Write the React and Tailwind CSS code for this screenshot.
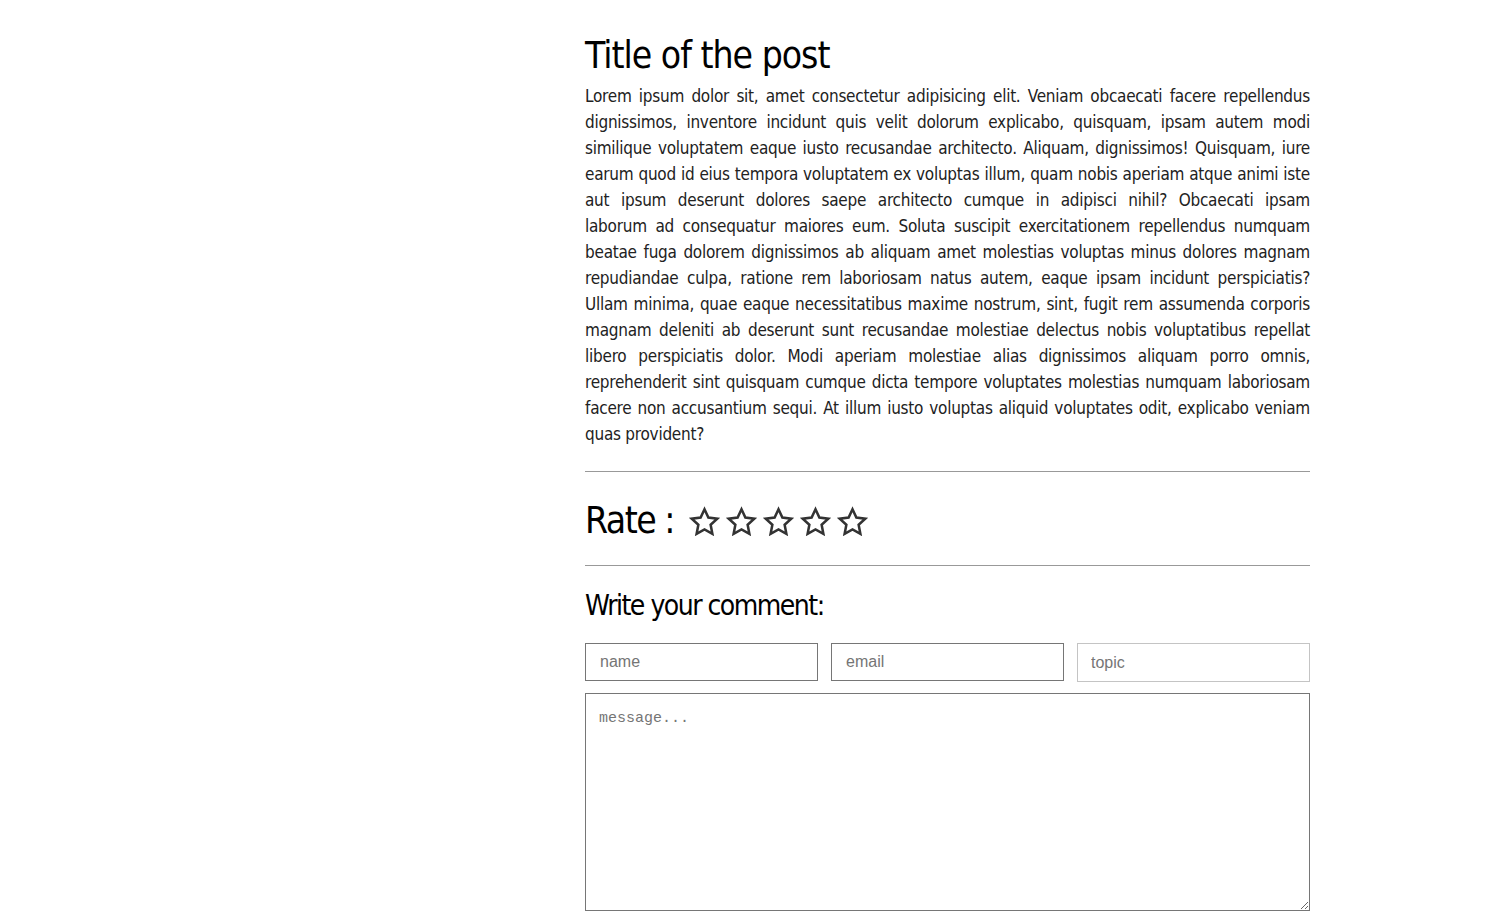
import { useState } from "react";

const bodyLines = [
  "Lorem ipsum dolor sit, amet consectetur adipisicing elit. Veniam obcaecati facere repellendus",
  "dignissimos, inventore incidunt quis velit dolorum explicabo, quisquam, ipsam autem modi",
  "similique voluptatem eaque iusto recusandae architecto. Aliquam, dignissimos! Quisquam, iure",
  "earum quod id eius tempora voluptatem ex voluptas illum, quam nobis aperiam atque animi iste",
  "aut ipsum deserunt dolores saepe architecto cumque in adipisci nihil? Obcaecati ipsam",
  "laborum ad consequatur maiores eum. Soluta suscipit exercitationem repellendus numquam",
  "beatae fuga dolorem dignissimos ab aliquam amet molestias voluptas minus dolores magnam",
  "repudiandae culpa, ratione rem laboriosam natus autem, eaque ipsam incidunt perspiciatis?",
  "Ullam minima, quae eaque necessitatibus maxime nostrum, sint, fugit rem assumenda corporis",
  "magnam deleniti ab deserunt sunt recusandae molestiae delectus nobis voluptatibus repellat",
  "libero perspiciatis dolor. Modi aperiam molestiae alias dignissimos aliquam porro omnis,",
  "reprehenderit sint quisquam cumque dicta tempore voluptates molestias numquam laboriosam",
  "facere non accusantium sequi. At illum iusto voluptas aliquid voluptates odit, explicabo veniam",
];

function StarIcon({ filled, onClick }) {
  return (
    <svg
      onClick={onClick}
      viewBox="0 0 24 24"
      className="w-[33px] h-[32px] cursor-pointer"
      fill={filled ? "#333" : "none"}
      stroke="#333"
      strokeWidth="1.9"
      strokeLinejoin="miter"
      strokeMiterlimit="4"
    >
      <polygon points="12 2.5 14.9 8.7 21.6 9.5 16.6 14.1 17.9 20.8 12 17.5 6.1 20.8 7.4 14.1 2.4 9.5 9.1 8.7" />
    </svg>
  );
}

function Rating() {
  const [rate, setRate] = useState(0);
  return (
    <div className="flex items-center h-[48px] mt-[25px]">
      <span className="text-[37px] leading-[48px] tracking-[-1.5px] text-black mr-[14px]">Rate :</span>
      <div className="flex gap-[4px] mt-[2px]">
        {[1, 2, 3, 4, 5].map((n) => (
          <StarIcon key={n} filled={n <= rate} onClick={() => setRate(n)} />
        ))}
      </div>
    </div>
  );
}

export default function App() {
  return (
    <div
      className="min-h-screen bg-white flex"
      style={{ fontFamily: '"DejaVu Sans Condensed", "Liberation Sans Narrow", "Liberation Sans", sans-serif' }}
    >
      <div className="w-[585px] shrink-0" />
      <main className="w-[725px] pt-[36px]">
        <h1 className="text-[37px] leading-[40px] tracking-[-1px] text-black">Title of the post</h1>
        <div className="mt-[7px] text-[17px] leading-[26px] tracking-[-0.25px] text-[#222]">
          {bodyLines.map((line) => (
            <p key={line} className="text-justify [text-align-last:justify]">
              {line}
            </p>
          ))}
          <p>quas provident?</p>
        </div>

        <hr className="mt-[24px] border-0 border-t border-[#999]" />
        <Rating />
        <hr className="mt-[20px] border-0 border-t border-[#999]" />

        <h3 className="mt-[22px] text-[28px] leading-[36px] tracking-[-1.5px] text-black">Write your comment:</h3>
        <form className="mt-[19px]" style={{ fontFamily: '"Liberation Sans", Arial, sans-serif' }}>
          <div className="grid grid-cols-3 gap-[13px] items-start">
            <input
              placeholder="name"
              className="h-[38px] border border-[#767676] px-[14px] text-[16px] placeholder:text-[#757575] outline-none"
            />
            <input
              placeholder="email"
              className="h-[38px] border border-[#767676] px-[14px] text-[16px] placeholder:text-[#757575] outline-none"
            />
            <input
              placeholder="topic"
              className="h-[39px] border border-[#c4c4c4] px-[13px] text-[16px] placeholder:text-[#757575] outline-none"
            />
          </div>
          <textarea
            placeholder="message..."
            className="mt-[11px] block w-full h-[218px] border border-[#767676] px-[13px] pt-[14px] text-[15px] placeholder:text-[#757575] outline-none"
            style={{ fontFamily: '"Liberation Mono", monospace' }}
          />
        </form>
      </main>
    </div>
  );
}
